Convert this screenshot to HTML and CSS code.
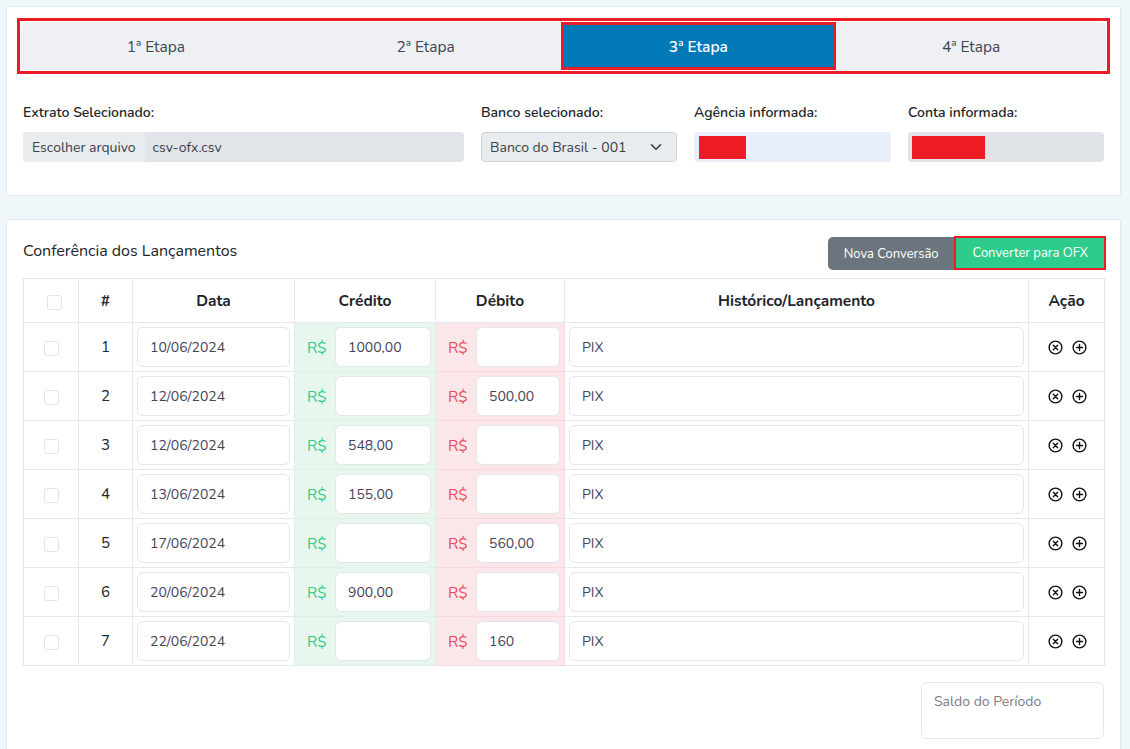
FILE: index.html
```html
<!DOCTYPE html>
<html lang="pt-BR">
<head>
<meta charset="utf-8">
<title>Conversor OFX</title>
<link rel="stylesheet" href="styles.css">
</head>
<body>
<div class="page">
  <section class="card card-top">
    <div class="steps-outline">
      <div class="steps">
        <div class="step">1ª Etapa</div>
        <div class="step">2ª Etapa</div>
        <div class="step active">3ª Etapa</div>
        <div class="step">4ª Etapa</div>
      </div>
    </div>
    <div class="fields">
      <div class="field">
        <div class="label">Extrato Selecionado:</div>
        <div class="file"><span class="file-btn">Escolher arquivo</span><span class="file-name">csv-ofx.csv</span></div>
      </div>
      <div class="field">
        <div class="label">Banco selecionado:</div>
        <div class="select"><span>Banco do Brasil - 001</span>
          <svg class="chev" width="12" height="12" viewBox="0 0 16 16"><path d="M2 5l6 6 6-6" fill="none" stroke="#343a40" stroke-width="2" stroke-linecap="round" stroke-linejoin="round"/></svg>
        </div>
      </div>
      <div class="field">
        <div class="label">Agência informada:</div>
        <div class="box box-agencia"><span class="redact redact-ag"></span></div>
      </div>
      <div class="field">
        <div class="label">Conta informada:</div>
        <div class="box box-conta"><span class="redact redact-ct"></span></div>
      </div>
    </div>
  </section>

  <section class="card card-main">
    <div class="main-head">
      <h2 class="title">Conferência dos Lançamentos</h2>
      <div class="btn-group">
        <button class="btn btn-gray">Nova Conversão</button>
        <button class="btn btn-green">Converter para OFX</button>
      </div>
    </div>
    <table class="grid">
      <colgroup>
        <col class="c-check"><col class="c-num"><col class="c-date"><col class="c-cred"><col class="c-deb"><col class="c-hist"><col class="c-act">
      </colgroup>
      <thead>
        <tr>
          <th><span class="chk chk-head"></span></th>
          <th>#</th>
          <th>Data</th>
          <th>Crédito</th>
          <th>Débito</th>
          <th>Histórico/Lançamento</th>
          <th>Ação</th>
        </tr>
      </thead>
      <tbody id="rows"></tbody>
    </table>
    <div class="saldo-row">
      <div class="saldo">Saldo do Período</div>
    </div>
  </section>
</div>
<script src="app.js"></script>
</body>
</html>
```
FILE: app.js
```js
const data = [
  ["10/06/2024", "1000,00", ""],
  ["12/06/2024", "", "500,00"],
  ["12/06/2024", "548,00", ""],
  ["13/06/2024", "155,00", ""],
  ["17/06/2024", "", "560,00"],
  ["20/06/2024", "900,00", ""],
  ["22/06/2024", "", "160"]
];
const xIcon = '<svg width="15" height="15" viewBox="0 0 16 16"><circle cx="8" cy="8" r="6.8" fill="none" stroke="#111" stroke-width="1.5"/><path d="M5.7 5.7l4.6 4.6M10.3 5.7l-4.6 4.6" stroke="#111" stroke-width="1.5" stroke-linecap="round"/></svg>';
const pIcon = '<svg width="15" height="15" viewBox="0 0 16 16"><circle cx="8" cy="8" r="6.8" fill="none" stroke="#111" stroke-width="1.5"/><path d="M8 4.8v6.4M4.8 8h6.4" stroke="#111" stroke-width="1.5" stroke-linecap="round"/></svg>';
const tbody = document.getElementById("rows");
tbody.innerHTML = data.map((r, i) => `
<tr>
  <td class="center"><span class="chk"></span></td>
  <td class="center num">${i + 1}</td>
  <td><div class="inp">${r[0]}</div></td>
  <td class="cred"><div class="money"><span class="cur">R$</span><div class="inp">${r[1]}</div></div></td>
  <td class="deb"><div class="money"><span class="cur">R$</span><div class="inp">${r[2]}</div></div></td>
  <td><div class="inp">PIX</div></td>
  <td class="center"><div class="acts">${xIcon}${pIcon}</div></td>
</tr>`).join("");
```
FILE: styles.css
```css
* { box-sizing: border-box; }
body {
  margin: 0;
  background: #eff7fb;
  font-family: "Nunito", "Lato", "Noto Sans", sans-serif;
  color: #212529;
}
.page { padding: 6px 9px 0 6px; }
.card {
  background: #fff;
  border: 1px solid #e2eaef;
  border-radius: 2px;
}
.card-top { padding: 11px 16px 33px 16px; }
.steps-outline {
  border: 3px solid #ed1c24;
  padding: 1px;
  margin: 0 -6px 0 -6px;
}
.steps {
  display: flex;
  background: #eef0f4;
  border-radius: 6px;
  height: 48px;
}
.step {
  flex: 1;
  display: flex;
  align-items: center;
  justify-content: center;
  font-size: 15.5px;
  color: #3b4656;
}
.step.active {
  background: #0079b6;
  color: #fff;
  font-weight: 600;
  border: 3px solid #ed1c24;
}
.fields {
  display: grid;
  grid-template-columns: 441px 196px 197px 196px;
  column-gap: 17px;
  margin-top: 29px;
}
.label {
  font-size: 14px;
  font-weight: 600;
  line-height: 20px;
  margin-bottom: 9px;
  color: #212529;
}
.file {
  display: flex;
  height: 30px;
  background: #e1e4e8;
  border-radius: 4px;
  font-size: 14px;
  color: #3a3f48;
  overflow: hidden;
}
.file-btn {
  display: flex;
  align-items: center;
  padding: 0 9px;
  background: #e9ecef;
}
.file-name { display: flex; align-items: center; padding-left: 8px; }
.select {
  display: flex;
  align-items: center;
  justify-content: space-between;
  height: 30px;
  padding: 0 14px 0 8px;
  background: #e9ecef;
  border: 1px solid #cfd4d9;
  border-radius: 4px;
  font-size: 14px;
  color: #3a3f48;
}
.box {
  height: 30px;
  border-radius: 4px;
  padding: 4px 0 0 4px;
}
.box-agencia { background: #e8eefa; }
.box-conta { background: #e0e3e7; }
.redact { display: block; height: 23px; background: #ed1c24; }
.redact-ag { width: 47px; margin-left: 1px; }
.redact-ct { width: 73px; }

.card-main {
  margin-top: 23px;
  padding: 16px 16px 10px 16px;
  min-height: 540px;
}
.main-head {
  display: flex;
  justify-content: space-between;
  align-items: flex-start;
}
.title {
  margin: 4px 0 0 0;
  font-size: 16px;
  font-weight: 400;
  color: #212529;
}
.btn-group { display: flex; margin-right: -2px; }
.btn {
  font-family: inherit;
  border: none;
  color: #fff;
  font-size: 13px;
  height: 34px;
  cursor: pointer;
}
.btn-gray {
  background: #6c757d;
  border-radius: 5px 0 0 5px;
  padding: 0 15px 0 16px;
  margin-top: 1px;
  height: 33px;
}
.btn-green {
  background: #2ecc8c;
  border: 2px solid #ed1c24;
  padding: 0 16px 0 17px;
}
.grid {
  margin-top: 8px;
  width: 1081px;
  border-collapse: collapse;
  table-layout: fixed;
}
.c-check { width: 55px; }
.c-num { width: 54px; }
.c-date { width: 162px; }
.c-cred { width: 141px; }
.c-deb { width: 129px; }
.c-hist { width: 464px; }
.c-act { width: 76px; }
.grid th, .grid td {
  border: 1px solid #e4e8ee;
}
.grid th {
  height: 44px;
  font-size: 15.5px;
  font-weight: 700;
  text-align: center;
  color: #212529;
}
.grid td {
  height: 49px;
  padding: 4px;
  font-size: 14px;
}
.center { text-align: center; }
.num { font-size: 15px !important; color: #212529; }
.chk {
  display: inline-block;
  width: 15px;
  height: 15px;
  border: 1px solid #dfe3e8;
  border-radius: 3px;
  vertical-align: middle;
  background: #fff;
}
.chk-head { margin-left: 6px; }
.inp {
  height: 40px;
  border: 1px solid #e3e6ea;
  border-radius: 6px;
  background: #fff;
  display: flex;
  align-items: center;
  padding-left: 12px;
  font-size: 14px;
  color: #43455a;
}
.grid td.cred { background: #e7f7ee; border-color: #e0efe7; }
.grid td.deb { background: #fbe7ea; border-color: #f4dadd; }
.money { display: flex; align-items: center; }
.cur { font-size: 15.5px; padding: 0 0 0 8px; width: 36px; flex: none; }
.cred .cur { color: #35c98a; }
.deb .cur { color: #ea4b5e; }
.money .inp { flex: 1; }
.acts { display: flex; justify-content: center; gap: 9px; padding-left: 2px; }
.acts svg { display: block; }
.saldo-row { display: flex; justify-content: flex-end; margin-top: 16px; }
.saldo {
  width: 183px;
  height: 57px;
  border: 1px solid #e4e7eb;
  border-radius: 6px;
  padding: 9px 12px;
  font-size: 14px;
  color: #777c85;
}
```
